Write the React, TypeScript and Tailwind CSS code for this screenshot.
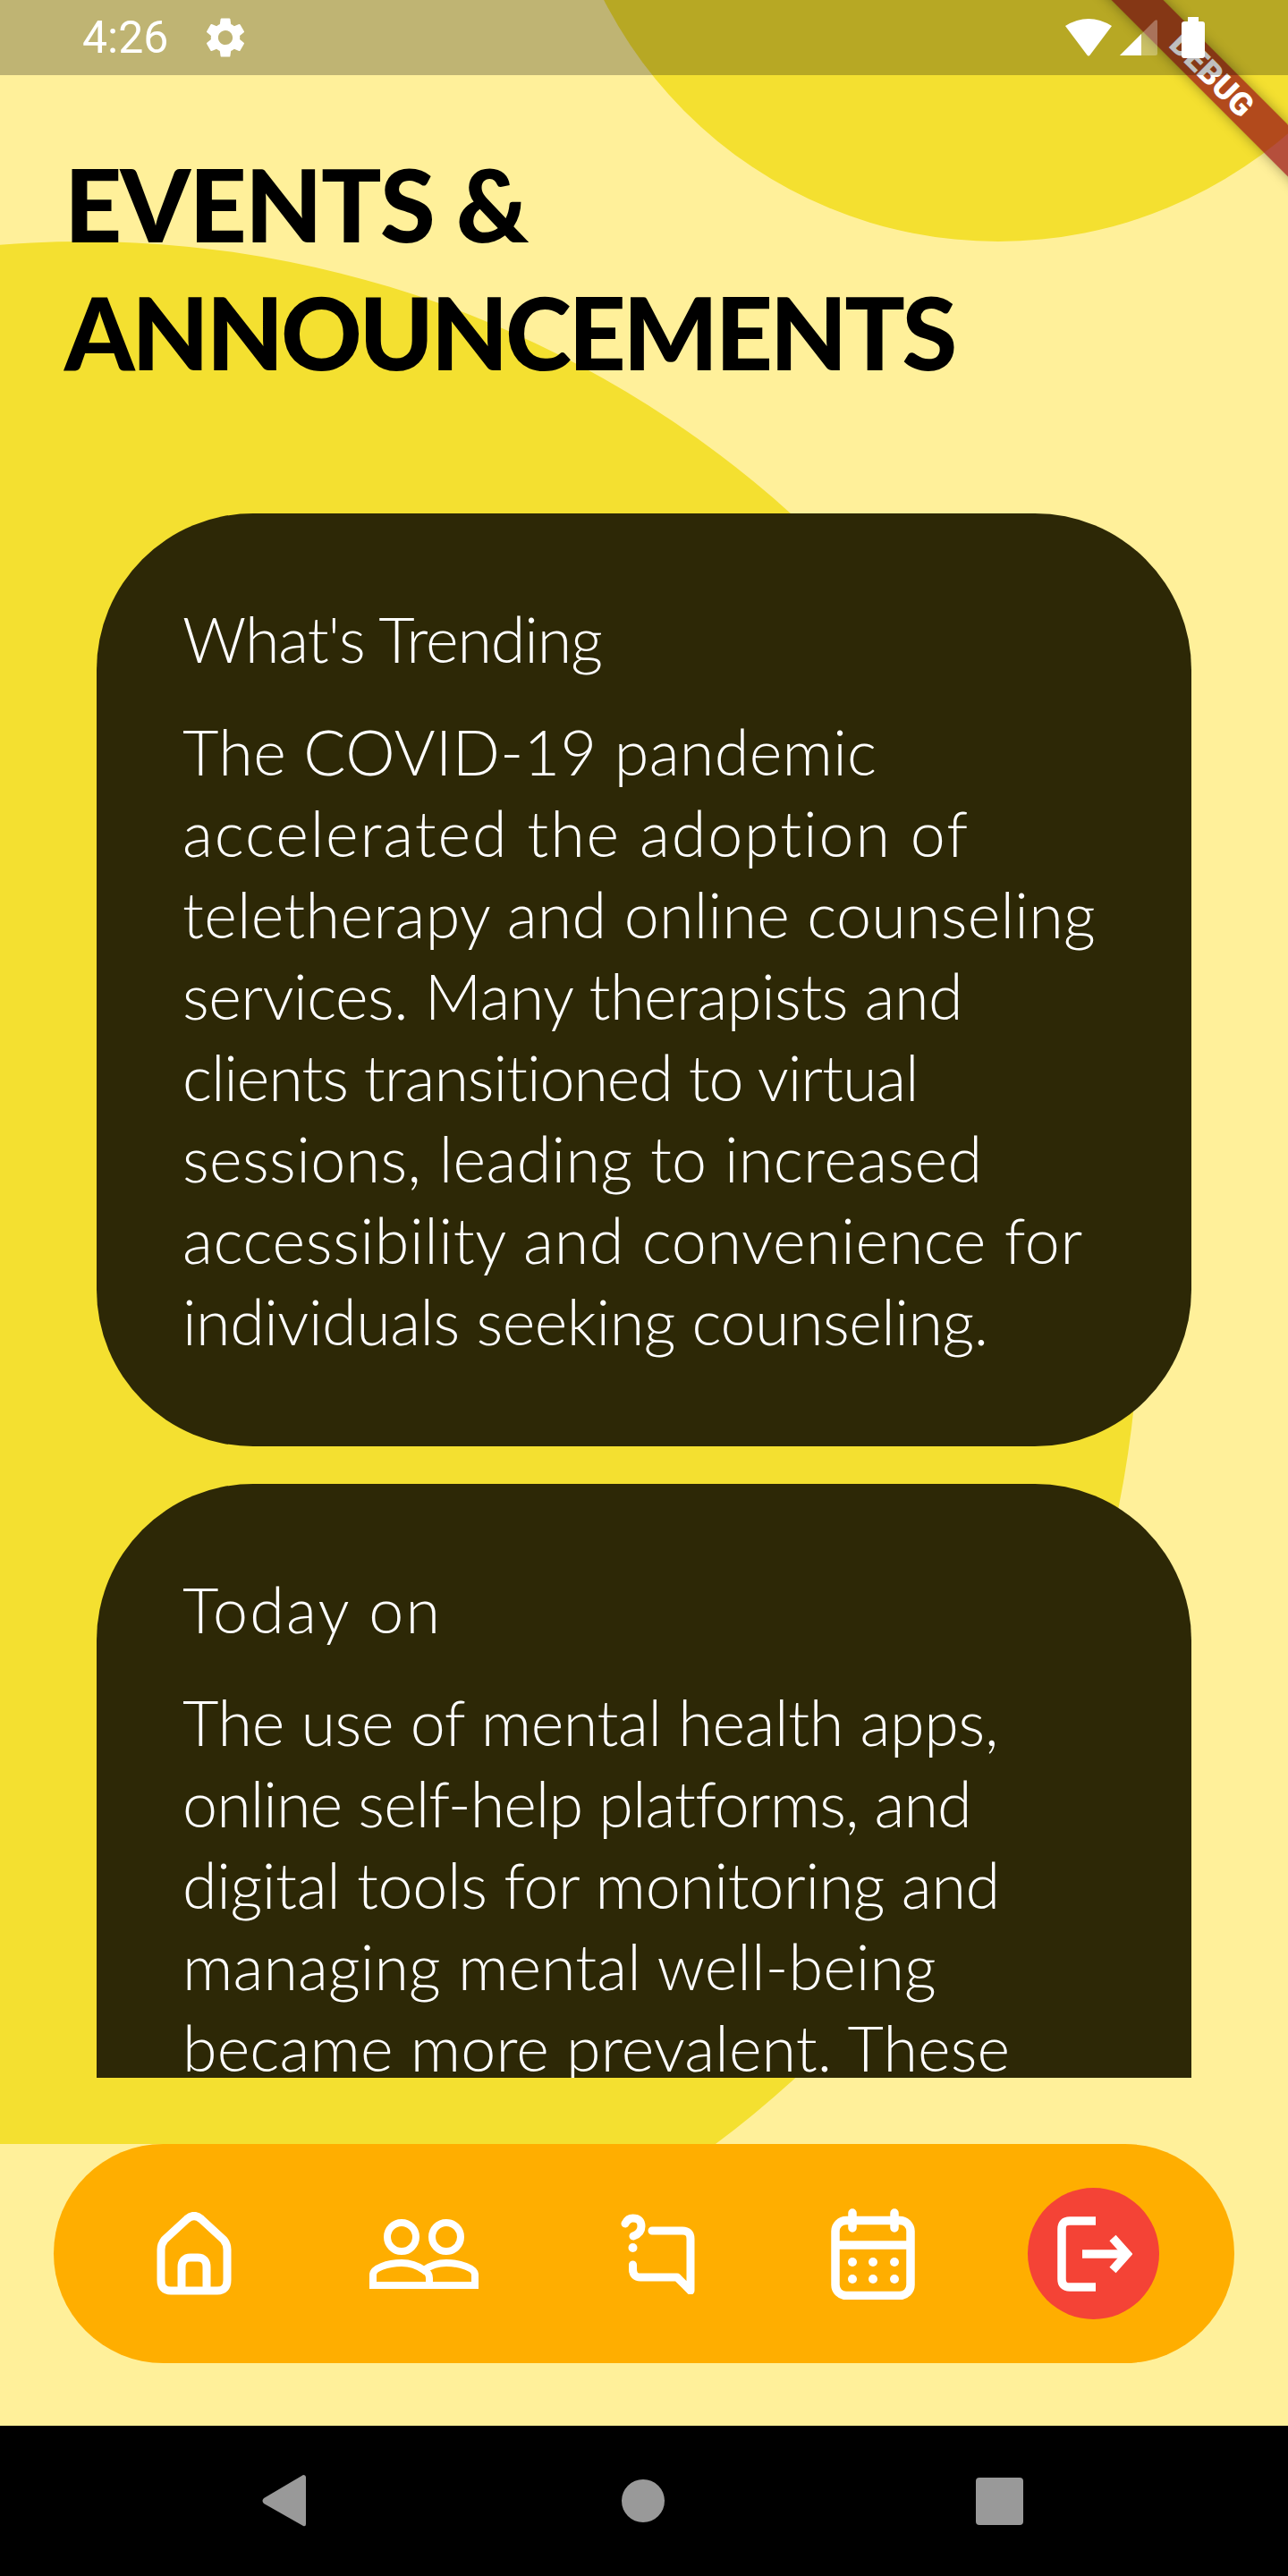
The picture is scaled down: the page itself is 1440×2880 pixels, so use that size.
const cards = [
  {
    title: "What's Trending",
    titleClass: "tracking-[-1.1px]",
    lines: [
      { text: "The COVID-19 pandemic", cls: "tracking-[0.35px]" },
      { text: "accelerated the adoption of", cls: "tracking-[1.9px]" },
      { text: "teletherapy and online counseling", cls: "tracking-[0.28px]" },
      { text: "services. Many therapists and", cls: "tracking-[-0.5px]" },
      { text: "clients transitioned to virtual", cls: "tracking-[-1.07px]" },
      { text: "sessions, leading to increased", cls: "tracking-[0.37px]" },
      { text: "accessibility and convenience for", cls: "tracking-[0.67px]" },
      { text: "individuals seeking counseling.", cls: "tracking-[-0.47px]" },
    ],
  },
  {
    title: "Today on",
    titleClass: "tracking-[2.2px]",
    lines: [
      { text: "The use of mental health apps,", cls: "tracking-[-0.37px]" },
      { text: "online self-help platforms, and", cls: "tracking-[-0.9px]" },
      { text: "digital tools for monitoring and", cls: "tracking-[-0.34px]" },
      { text: "managing mental well-being", cls: "tracking-[0.1px]" },
      { text: "became more prevalent. These", cls: "tracking-[0.13px]" },
    ],
  },
];

function StatusBar() {
  return (
    <div className="absolute left-0 top-0 z-20 flex h-[84px] w-full items-center justify-between bg-black/25 pl-[92px] pr-[93px] text-white">
      <div className="flex items-center">
        <span className="font-['Roboto',sans-serif] text-[50px] leading-none">4:26</span>
        <svg className="ml-[37px]" width="54" height="54" viewBox="0 0 24 24" fill="#fff">
          <path d="M19.14 12.94c.04-.3.06-.61.06-.94 0-.32-.02-.64-.07-.94l2.03-1.58c.18-.14.23-.41.12-.61l-1.92-3.32c-.12-.22-.37-.29-.59-.22l-2.39.96c-.5-.38-1.03-.7-1.62-.94l-.36-2.54c-.04-.24-.24-.41-.48-.41h-3.84c-.24 0-.43.17-.47.41l-.36 2.54c-.59.24-1.13.57-1.62.94l-2.39-.96c-.22-.08-.47 0-.59.22L2.74 8.87c-.12.21-.08.47.12.61l2.03 1.58c-.05.3-.09.63-.09.94s.02.64.07.94l-2.03 1.58c-.18.14-.23.41-.12.61l1.92 3.32c.12.22.37.29.59.22l2.39-.96c.5.38 1.03.7 1.62.94l.36 2.54c.05.24.24.41.48.41h3.84c.24 0 .44-.17.47-.41l.36-2.54c.59-.24 1.13-.56 1.62-.94l2.39.96c.22.08.47 0 .59-.22l1.92-3.32c.12-.22.07-.47-.12-.61l-2.01-1.58zM12 15.6c-1.98 0-3.6-1.62-3.6-3.6s1.62-3.6 3.6-3.6 3.6 1.62 3.6 3.6-1.62 3.6-3.6 3.6z" />
        </svg>
      </div>
      <div className="flex items-center">
        {/* wifi */}
        <svg width="54" height="44" viewBox="0 0 54 44" fill="#fff">
          <path d="M1 9 Q27 -7 53 9 L29 41 Q27 44 25 41 Z" />
        </svg>
        {/* signal */}
        <svg className="ml-[8px]" width="42" height="44" viewBox="0 0 42 44">
          <path d="M0 42 L39 3 Q42 1 42 4 V40 Q42 42 40 42 Z" fill="#fff" fillOpacity="0.3" />
          <path d="M0 42 L24 18 V42 Z" fill="#fff" />
        </svg>
        {/* battery */}
        <svg className="ml-[27px]" width="26" height="46" viewBox="0 0 26 46" fill="#fff">
          <path d="M7 0 H19 V5 H23 Q26 5 26 8 V43 Q26 46 23 46 H3 Q0 46 0 43 V8 Q0 5 3 5 H7 Z" />
        </svg>
      </div>
    </div>
  );
}

function DebugBanner() {
  return (
    <div className="absolute left-[1155px] top-[63px] z-10 flex h-[41px] w-[400px] rotate-45 items-center justify-center bg-[rgba(150,10,20,0.7)] shadow-[0_0_14px_rgba(0,0,0,0.35)]">
      <span className="font-['Roboto',sans-serif] text-[36px] font-black leading-none text-white">DEBUG</span>
    </div>
  );
}

type CardProps = {
  title: string;
  titleClass: string;
  lines: { text: string; cls: string }[];
};

function Card({ title, titleClass, lines }: CardProps) {
  return (
    <div className="min-h-[1043px] shrink-0 rounded-[175px] bg-[#2d2806] px-[96px] pb-[94px] pt-[95px] font-['Lato',sans-serif] text-[70px] font-light leading-[91px] text-white">
      <div className={`mb-[35px] ${titleClass}`}>{title}</div>
      {lines.map((line) => (
        <div key={line.text} className={`whitespace-nowrap ${line.cls}`}>
          {line.text}
        </div>
      ))}
    </div>
  );
}

function NavBar() {
  return (
    <div className="flex h-[245px] w-[1320px] shrink-0 items-center rounded-full bg-[#ffae00] pl-[115px] text-white">
      <svg width="84" height="93" viewBox="0 0 84 93" fill="none" stroke="#fff" strokeWidth="9">
        <path d="M5 42 Q5 36 9 31 L34 8 Q42 1 50 8 L75 31 Q79 36 79 42 V76 Q79 88 68 88 H16 Q5 88 5 76 Z" />
        <path d="M28 88 V62 Q28 51 38 51 H46 Q56 51 56 62 V88" />
      </svg>
      <svg className="ml-[154px]" width="122" height="78" viewBox="0 0 122 78" fill="none" stroke="#fff" strokeWidth="8">
        <circle cx="36" cy="20" r="16" />
        <circle cx="86" cy="20" r="16" />
        <path d="M4 74 V62 C4 55 20 49 36 49 C46 49 54 52 61 57 C68 52 76 49 86 49 C102 49 118 55 118 62 V74 Z" />
        <path d="M61 57 Q67 60 67 66 V74" />
      </svg>
      <svg className="ml-[159px]" width="83" height="90" viewBox="0 0 83 90" fill="none" stroke="#fff" strokeWidth="9" strokeLinecap="round" strokeLinejoin="round">
        <path d="M5 11 Q8 5 13.500 5 Q23 5 23 14 Q23 22 14 25" />
        <circle cx="13.500" cy="38" r="5" fill="#fff" stroke="none" />
        <path d="M13.500 57 V62 Q13.500 71 22 71 H63 L78 86 V28 Q78 19 69 19 H35" />
      </svg>
      <svg className="ml-[152px]" width="94" height="102" viewBox="0 0 94 102" fill="none" stroke="#fff" strokeWidth="9.500">
        <rect x="5" y="13.500" width="84" height="84" rx="12" />
        <path d="M5 41 H89" />
        <path d="M24 5 V22 M71 5 V22" strokeLinecap="round" />
        <g fill="#fff" stroke="none">
          <circle cx="24" cy="60" r="5" />
          <circle cx="47" cy="60" r="5" />
          <circle cx="71" cy="60" r="5" />
          <circle cx="24" cy="79" r="5" />
          <circle cx="47" cy="79" r="5" />
          <circle cx="71" cy="79" r="5" />
        </g>
      </svg>
      <div className="ml-[126px] flex h-[147px] w-[147px] items-center justify-center rounded-full bg-[#f44336] pl-[2px]">
        <svg width="84" height="84" viewBox="0 0 84 84" fill="none" stroke="#fff" strokeWidth="9.500">
          <path d="M43 5 H14 Q5 5 5 14 V70 Q5 79 14 79 H43" />
          <path d="M28 42 H78" />
          <path d="M62 24 L78 42 L62 60" />
        </svg>
      </div>
    </div>
  );
}

export default function App() {
  return (
    <div className="relative flex h-[2880px] w-[1440px] flex-col overflow-hidden bg-[#fff09a]">
      <div className="relative flex h-[2397px] shrink-0 flex-col overflow-hidden">
        {/* background blobs */}
        <div className="absolute left-[621px] top-[-720px] h-[990px] w-[990px] rounded-full bg-[#f4e030]" />
        <div className="absolute left-[-1088px] top-[270px] h-[2362px] w-[2362px] rounded-full bg-[#f4e030]" />

        <h1 className="relative mt-[156px] pl-[72px] font-['Lato',sans-serif] text-[112px] font-black leading-[143px] text-black">
          <span className="block tracking-[-1.7px]">EVENTS &amp;</span>
          <span className="block tracking-[-3.3px]">ANNOUNCEMENTS</span>
        </h1>

        <div className="relative mt-[132px] flex h-[1749px] flex-col gap-[42px] overflow-hidden px-[108px]">
          {cards.map((c) => (
            <Card key={c.title} title={c.title} titleClass={c.titleClass} lines={c.lines} />
          ))}
        </div>
      </div>

      <div className="flex h-[315px] shrink-0 justify-center">
        <NavBar />
      </div>

      {/* android nav */}
      <div className="flex h-[168px] shrink-0 items-center bg-black pl-[292px]">
        <svg width="50" height="58" viewBox="0 0 50 58" fill="#999">
          <path d="M47 0 Q50 0 50 3 V55 Q50 58 47 57 L3 32 Q0 29 3 26 Z" />
        </svg>
        <div className="ml-[353px] h-[48px] w-[48px] rounded-full bg-[#999]" />
        <div className="ml-[348px] h-[53px] w-[53px] rounded-[4px] bg-[#999]" />
      </div>

      <DebugBanner />
      <StatusBar />
    </div>
  );
}
